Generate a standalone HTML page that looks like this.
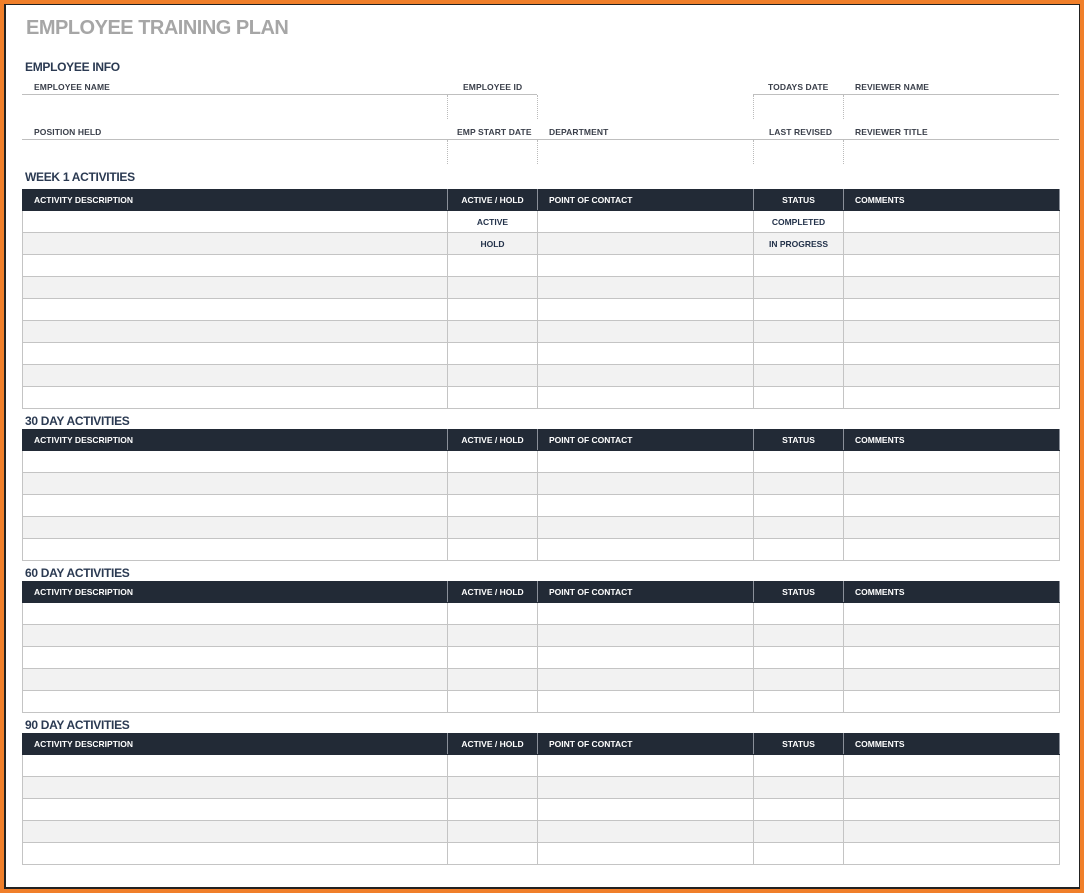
<!DOCTYPE html>
<html><head><meta charset="utf-8">
<style>
*{margin:0;padding:0;box-sizing:border-box}
body{width:1084px;height:893px;background:#f07f2a;position:relative;overflow:hidden;font-family:"Liberation Sans",Arial,sans-serif}
.page{position:absolute;left:4px;top:4px;right:4px;bottom:4px;background:#fff;border:1px solid #222;border-bottom-width:2px;border-left-width:2px}
.abs{position:absolute}
.title{left:26px;top:17px;font-size:20px;font-weight:bold;color:#a6a6a6;letter-spacing:-0.5px}
.sec{font-size:12px;font-weight:bold;color:#2b3a52;letter-spacing:-0.3px}
.lbl{font-size:8.5px;font-weight:bold;color:#3a3f4a;letter-spacing:0.1px}
.hl{height:1px;background:#bfbfbf}
.dv{width:0;border-left:1px dotted #bbb}
table{position:absolute;left:22px;width:1037px;border-collapse:collapse;table-layout:fixed}
td,th{border:1px solid #c4c4c4;height:22px;font-size:8.5px;font-weight:bold;color:#23324a;text-align:center;padding:0}
th{background:#222a36;color:#fff;height:21px;border-color:#222a36;border-right-color:#8a8f99}
th.l{text-align:left;padding-left:11px}
tr:nth-child(odd) td{background:#f2f2f2}
tr.h+tr td{background:#fff}
</style></head><body>
<div class="page"></div>
<div class="abs title">EMPLOYEE TRAINING PLAN</div>
<div class="abs sec" style="left:25px;top:60px">EMPLOYEE INFO</div>
<div class="abs lbl" style="left:34px;top:82px">EMPLOYEE NAME</div>
<div class="abs lbl" style="left:463px;top:82px">EMPLOYEE ID</div>
<div class="abs lbl" style="left:768px;top:82px">TODAYS DATE</div>
<div class="abs lbl" style="left:855px;top:82px">REVIEWER NAME</div>
<div class="abs hl" style="left:22px;top:94px;width:515px"></div>
<div class="abs hl" style="left:753px;top:94px;width:306px"></div>
<div class="abs dv" style="left:447px;top:95px;height:24px"></div>
<div class="abs dv" style="left:537px;top:95px;height:24px"></div>
<div class="abs dv" style="left:753px;top:95px;height:24px"></div>
<div class="abs dv" style="left:843px;top:95px;height:24px"></div>
<div class="abs lbl" style="left:34px;top:127px">POSITION HELD</div>
<div class="abs lbl" style="left:457px;top:127px">EMP START DATE</div>
<div class="abs lbl" style="left:549px;top:127px">DEPARTMENT</div>
<div class="abs lbl" style="left:769px;top:127px">LAST REVISED</div>
<div class="abs lbl" style="left:855px;top:127px">REVIEWER TITLE</div>
<div class="abs hl" style="left:22px;top:139px;width:1037px"></div>
<div class="abs dv" style="left:447px;top:140px;height:24px"></div>
<div class="abs dv" style="left:537px;top:140px;height:24px"></div>
<div class="abs dv" style="left:753px;top:140px;height:24px"></div>
<div class="abs dv" style="left:843px;top:140px;height:24px"></div>

<div class="abs sec" style="left:25px;top:170px">WEEK 1 ACTIVITIES</div>
<table style="top:189px" id="t1"><colgroup><col style="width:425px"><col style="width:90px"><col style="width:216px"><col style="width:90px"><col style="width:216px"></colgroup>
<tr class="h"><th class="l">ACTIVITY DESCRIPTION</th><th>ACTIVE / HOLD</th><th class="l">POINT OF CONTACT</th><th>STATUS</th><th class="l">COMMENTS</th></tr>
<tr><td></td><td>ACTIVE</td><td></td><td>COMPLETED</td><td></td></tr>
<tr><td></td><td>HOLD</td><td></td><td>IN PROGRESS</td><td></td></tr>
</table>

<div class="abs sec" style="left:25px;top:414px">30 DAY ACTIVITIES</div>
<table style="top:429px" id="t2"><colgroup><col style="width:425px"><col style="width:90px"><col style="width:216px"><col style="width:90px"><col style="width:216px"></colgroup>
<tr class="h"><th class="l">ACTIVITY DESCRIPTION</th><th>ACTIVE / HOLD</th><th class="l">POINT OF CONTACT</th><th>STATUS</th><th class="l">COMMENTS</th></tr>
</table>

<div class="abs sec" style="left:25px;top:566px">60 DAY ACTIVITIES</div>
<table style="top:581px" id="t3"><colgroup><col style="width:425px"><col style="width:90px"><col style="width:216px"><col style="width:90px"><col style="width:216px"></colgroup>
<tr class="h"><th class="l">ACTIVITY DESCRIPTION</th><th>ACTIVE / HOLD</th><th class="l">POINT OF CONTACT</th><th>STATUS</th><th class="l">COMMENTS</th></tr>
</table>

<div class="abs sec" style="left:25px;top:718px">90 DAY ACTIVITIES</div>
<table style="top:733px" id="t4"><colgroup><col style="width:425px"><col style="width:90px"><col style="width:216px"><col style="width:90px"><col style="width:216px"></colgroup>
<tr class="h"><th class="l">ACTIVITY DESCRIPTION</th><th>ACTIVE / HOLD</th><th class="l">POINT OF CONTACT</th><th>STATUS</th><th class="l">COMMENTS</th></tr>
</table>
<script>
function add(id,n){var t=document.getElementById(id);for(var i=0;i<n;i++){var r=t.insertRow(-1);for(var j=0;j<5;j++)r.insertCell(-1);}}
add('t1',7);add('t2',5);add('t3',5);add('t4',5);
</script>
</body></html>
